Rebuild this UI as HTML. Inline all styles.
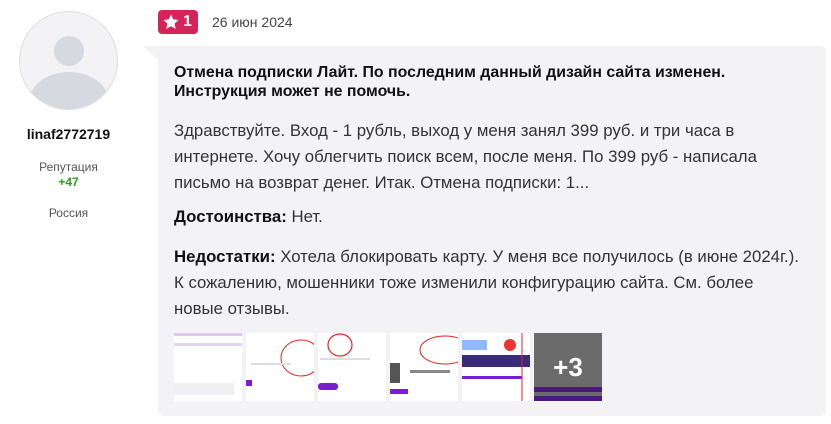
<!DOCTYPE html>
<html><head><meta charset="utf-8"><style>
*{margin:0;padding:0;box-sizing:border-box}
body{width:831px;height:424px;background:#fff;font-family:"Liberation Sans",sans-serif;position:relative;overflow:hidden;color:#333}
.av{position:absolute;left:19px;top:11px;width:99px;height:99px;border-radius:50%;background:#f3f3f5;border:1px solid #ddd;overflow:hidden}
.av .h{position:absolute;left:34px;top:24px;width:30px;height:30px;border-radius:50%;background:#d7d9e1}
.av .b{position:absolute;left:9px;top:60px;width:80px;height:60px;border-radius:50%;background:#d7d9e1}
.nm{position:absolute;left:0;width:137px;top:126px;text-align:center;font-weight:bold;font-size:14px;color:#111}
.rp{position:absolute;left:0;width:137px;top:160px;text-align:center;font-size:12px;color:#555}
.rv{position:absolute;left:0;width:137px;top:175px;text-align:center;font-size:12px;color:#2a9d1a;font-weight:bold}
.ct{position:absolute;left:0;width:137px;top:206px;text-align:center;font-size:12px;color:#555}
.badge{position:absolute;left:158px;top:10px;width:40px;height:24px;background:#d6245a;border-radius:4px;color:#fff;font-weight:bold;font-size:16px}
.date{position:absolute;left:212px;top:14px;font-size:14px;color:#444}
.card{position:absolute;left:158px;top:46px;width:668px;height:370px;background:#f3f3f5;border-radius:0 6px 6px 6px}
.tri{position:absolute;left:143px;top:46px;width:0;height:0;border-right:15px solid #f3f3f5;border-bottom:14px solid transparent}
.t{position:absolute;left:174px;font-size:16.8px;white-space:nowrap}
.b1{font-weight:bold;color:#111;font-size:15.9px}
.th{position:absolute;top:333px;width:68px;height:68px;background:#fff;overflow:hidden}
</style></head><body>
<div class="av"><div class="h"></div><div class="b"></div></div>
<div class="nm">linaf2772719</div>
<div class="rp">Репутация</div>
<div class="rv">+47</div>
<div class="ct">Россия</div>
<div class="badge"><svg width="18" height="18" viewBox="0 0 24 24" style="position:absolute;left:4px;top:3px"><path d="M12 2l3 6.5 7 .8-5.2 4.8 1.4 7L12 17.6 5.8 21.1l1.4-7L2 9.3l7-.8z" fill="#fff"/></svg><span style="position:absolute;left:25px;top:3px">1</span></div>
<div class="date">26 июн 2024</div>
<div class="tri"></div>
<div class="card"></div>
<div class="t b1" style="top:64px">Отмена подписки Лайт. По последним данный дизайн сайта изменен.</div>
<div class="t b1" style="top:83px">Инструкция может не помочь.</div>
<div class="t" style="top:121px">Здравствуйте. Вход - 1 рубль, выход у меня занял 399 руб. и три часа в</div>
<div class="t" style="top:147px">интернете. Хочу облегчить поиск всем, после меня. По 399 руб - написала</div>
<div class="t" style="top:173px">письмо на возврат денег. Итак. Отмена подписки: 1...</div>
<div class="t" style="top:207px"><b style="color:#111">Достоинства:</b> Нет.</div>
<div class="t" style="top:247px"><b style="color:#111">Недостатки:</b> Хотела блокировать карту. У меня все получилось (в июне 2024г.).</div>
<div class="t" style="top:273px">К сожалению, мошенники тоже изменили конфигурацию сайта. См. более</div>
<div class="t" style="top:299px">новые отзывы.</div>
<div class="th" style="left:174px"><div style="height:3px;background:#dcc8ee"></div><div style="height:3px;background:#e4d4f2;margin-top:7px"></div><div style="position:absolute;left:0;top:50px;width:60px;height:12px;background:#f0f0f2"></div></div>
<div class="th" style="left:246px"><svg width="68" height="68"><ellipse cx="55" cy="25" rx="20" ry="18" fill="none" stroke="#e22" stroke-width="1"/><rect x="0" y="47" width="6" height="6" fill="#7a1fd0"/><rect x="5" y="30" width="40" height="2" fill="#ddd"/></svg></div>
<div class="th" style="left:318px"><svg width="68" height="68"><ellipse cx="22" cy="12" rx="12" ry="11" fill="none" stroke="#e22" stroke-width="1.2"/><rect x="0" y="50" width="20" height="7" rx="3" fill="#7a1fd0"/><rect x="2" y="25" width="50" height="2" fill="#ddd"/></svg></div>
<div class="th" style="left:390px"><svg width="68" height="68"><ellipse cx="55" cy="17" rx="25" ry="14" fill="none" stroke="#e22" stroke-width="1"/><rect x="0" y="30" width="10" height="20" fill="#555"/><rect x="0" y="56" width="18" height="5" fill="#7a1fd0"/><rect x="20" y="37" width="40" height="3" fill="#888"/></svg></div>
<div class="th" style="left:462px"><svg width="68" height="68"><rect x="0" y="7" width="25" height="10" fill="#8fb8ff"/><rect x="0" y="22" width="68" height="12" fill="#3a2a7a"/><rect x="0" y="43" width="60" height="3" fill="#7a1fd0"/><circle cx="48" cy="12" r="6" fill="#e33"/><line x1="60" y1="0" x2="60" y2="68" stroke="#e22"/></svg></div>
<div class="th" style="left:534px;background:#6b6b6b"><div style="position:absolute;left:0;top:54px;width:68px;height:5px;background:#4a1a80"></div><div style="position:absolute;left:0;top:63px;width:68px;height:5px;background:#4a1a80"></div><div style="position:absolute;left:0;width:68px;top:19px;text-align:center;color:#fff;font-size:26px;font-weight:bold">+3</div></div>
</body></html>
